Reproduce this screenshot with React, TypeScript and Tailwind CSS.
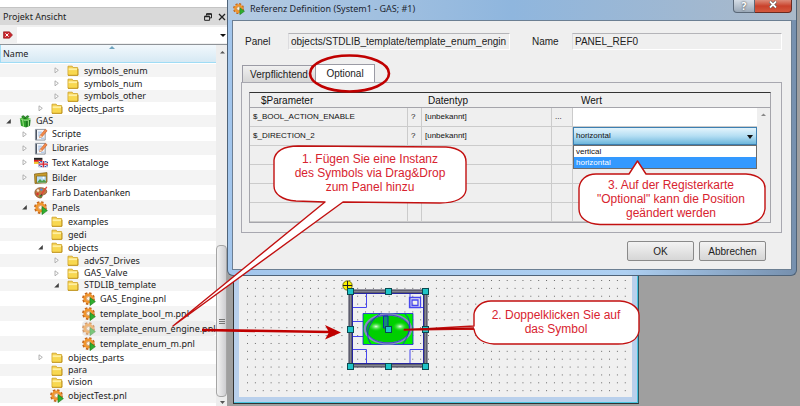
import type { ReactNode } from "react";

type IconName = "folder" | "gift" | "script" | "flags" | "image" | "palette" | "panel";

interface TreeItem {
  label: string;
  icon: IconName;
  indent: string;
  height: string;
  state?: "open" | "closed";
  selected?: boolean;
}

const LEVEL_0 = "pl-[5px]";
const LEVEL_1 = "pl-[21px]";
const LEVEL_2 = "pl-[37px]";
const LEVEL_3 = "pl-[53px]";
const LEVEL_4 = "pl-[69px]";

const tree: TreeItem[] = [
  { label: "symbols_enum", icon: "folder", indent: LEVEL_3, height: "h-[13px]", state: "closed" },
  { label: "symbols_num", icon: "folder", indent: LEVEL_3, height: "h-[13px]", state: "closed" },
  { label: "symbols_other", icon: "folder", indent: LEVEL_3, height: "h-3", state: "closed" },
  { label: "objects_parts", icon: "folder", indent: LEVEL_2, height: "h-[13px]", state: "closed" },
  { label: "GAS", icon: "gift", indent: LEVEL_0, height: "h-3", state: "open" },
  { label: "Scripte", icon: "script", indent: LEVEL_1, height: "h-[14px]", state: "closed" },
  { label: "Libraries", icon: "script", indent: LEVEL_1, height: "h-[14px]", state: "closed" },
  { label: "Text Kataloge", icon: "flags", indent: LEVEL_1, height: "h-[15px]", state: "closed" },
  { label: "Bilder", icon: "image", indent: LEVEL_1, height: "h-[15px]", state: "closed" },
  { label: "Farb Datenbanken", icon: "palette", indent: LEVEL_1, height: "h-[15px]" },
  { label: "Panels", icon: "panel", indent: LEVEL_1, height: "h-[15px]", state: "open" },
  { label: "examples", icon: "folder", indent: LEVEL_2, height: "h-[13px]" },
  { label: "gedi", icon: "folder", indent: LEVEL_2, height: "h-[13px]" },
  { label: "objects", icon: "folder", indent: LEVEL_2, height: "h-[13px]", state: "open" },
  { label: "advS7_Drives", icon: "folder", indent: LEVEL_3, height: "h-[13px]", state: "closed" },
  { label: "GAS_Valve", icon: "folder", indent: LEVEL_3, height: "h-3", state: "closed" },
  { label: "STDLIB_template", icon: "folder", indent: LEVEL_3, height: "h-3", state: "open" },
  { label: "GAS_Engine.pnl", icon: "panel", indent: LEVEL_4, height: "h-[15px]" },
  { label: "template_bool_m.pnl", icon: "panel", indent: LEVEL_4, height: "h-[15px]" },
  { label: "template_enum_engine.pnl", icon: "panel", indent: LEVEL_4, height: "h-[15px]", selected: true },
  { label: "template_enum_m.pnl", icon: "panel", indent: LEVEL_4, height: "h-[15px]" },
  { label: "objects_parts", icon: "folder", indent: LEVEL_2, height: "h-[13px]", state: "closed" },
  { label: "para", icon: "folder", indent: LEVEL_2, height: "h-3" },
  { label: "vision", icon: "folder", indent: LEVEL_2, height: "h-3" },
  { label: "objectTest.pnl", icon: "panel", indent: LEVEL_2, height: "h-[15px]" },
];

function PanelIcon({ size }: { size: string }) {
  return (
    <svg viewBox="0 0 14 14" className={size} aria-hidden="true">
      <circle cx="6.5" cy="6.5" r="5.4" fill="none" stroke="#c2641a" strokeWidth="2" strokeDasharray="2.4 1.84" />
      <circle cx="6.5" cy="6.5" r="3.7" fill="none" stroke="#f0952e" strokeWidth="2.8" />
      <circle cx="6.5" cy="6.5" r="2" fill="#fdf3e4" stroke="#b85c14" strokeWidth="0.5" />
      <path d="M8 5.6 13.4 9.6 8 13.6Z" fill="#2fae2f" stroke="#167a1b" strokeWidth="0.6" />
    </svg>
  );
}

function TreeIcon({ name }: { name: IconName }) {
  if (name === "panel") return <PanelIcon size="h-[14px] w-[14px]" />;
  if (name === "folder")
    return (
      <svg viewBox="0 0 12 11" className="h-[11px] w-3" aria-hidden="true">
        <path d="M1 1.2h4.2l1 1.4h4.4v7.6H1Z" fill="#f6d254" stroke="#d0a62c" strokeWidth="0.9" />
        <path d="M1.600 3.300h8.600v2H1.600Z" fill="#fff0a0" />
        <path d="M1 10.2h10V3.8" fill="none" stroke="#b88a10" strokeWidth="0.9" />
        <path d="M1.6 5.4h8.600v4.2H1.6Z" fill="#f8d850" />
      </svg>
    );
  if (name === "gift")
    return (
      <svg viewBox="0 0 14 13" className="h-[13px] w-[14px]" aria-hidden="true">
        <path d="M2 4 8 6 8 12.6 3 10.8Z" fill="#2e9e2a" />
        <path d="M8 6 12.6 4.4 12 10.8 8 12.6Z" fill="#1c7a1f" />
        <path d="M1.4 3.4 6 1.8 13 3.8 8 6Z" fill="#5fc94a" />
        <path d="M4.6 4.8 5.6 11.8M10.4 5.2V11.6" stroke="#9fe884" strokeWidth="1" />
        <path d="M7 3.6C4 3.6 3 1 5 .8S7 3.6 7 3.6 8 .2 10 .8 9.400 3.800 7 3.600" fill="#39a832" stroke="#135e17" strokeWidth="0.7" />
      </svg>
    );
  if (name === "script")
    return (
      <svg viewBox="0 0 14 14" className="h-[13px] w-[14px]" aria-hidden="true">
        <path d="M1 1.500h10.500v11.500H1Z" fill="#f3f6fa" stroke="#7d8590" strokeWidth="0.9" />
        <path d="M1.400 2v10.600h1.300V2Z" fill="#4c5563" />
        <path d="M4 4.500h4M4 6.500h3M4 8.500h2M7 11h3.500" stroke="#7ea5d8" strokeWidth="0.8" />
        <path d="M5.500 10.500 6.300 7.700 11.700 1.300 13.600 3 8.200 9.400Z" fill="#f08a4a" stroke="#c4501c" strokeWidth="0.6" />
        <path d="M5.500 10.500 6.300 7.700 8.200 9.400Z" fill="#f7dcb8" />
      </svg>
    );
  if (name === "flags")
    return (
      <svg viewBox="0 0 15 11" className="h-[11px] w-[15px]" aria-hidden="true">
        <path d="M0 .5h9v2.200H0Z" fill="#222" />
        <path d="M0 2.700h9v2.100H0Z" fill="#d81e1e" />
        <path d="M0 4.800h9V7H0Z" fill="#f2c62c" />
        <path d="M5 4h10v6.500H5Z" fill="#2c4da3" />
        <path d="m5 4 10 6.500M15 4 5 10.500" stroke="#fff" strokeWidth="1" />
        <path d="M10 4v6.500M5 7.250h10" stroke="#fff" strokeWidth="2.400" />
        <path d="M10 4v6.500M5 7.250h10" stroke="#d81e2c" strokeWidth="1.300" />
      </svg>
    );
  if (name === "image")
    return (
      <svg viewBox="0 0 14 12" className="h-3 w-[14px]" aria-hidden="true">
        <path d="M.500 2 13 .6V10L1 11.500Z" fill="#c99c2b" stroke="#7a5a10" strokeWidth="0.7" />
        <path d="M2.500 4h9.800v7H2.500Z" fill="#b7dcf5" stroke="#8a6a18" strokeWidth="0.8" />
        <path d="M3 10.500 6 7l2 2 2-1.500 2 2v1Z" fill="#4f9e48" />
        <circle cx="9.500" cy="5.800" r="1" fill="#fff" />
      </svg>
    );
  return (
    <svg viewBox="0 0 14 14" className="h-[14px] w-[14px]" aria-hidden="true">
      <path d="M1 5.500C2 1.500 7 .8 10.500 2.500S13 8 10 8.500 9 12.500 6 12 .3 9 1 5.500Z" fill="#c07a42" stroke="#7c4520" strokeWidth="0.7" />
      <circle cx="4" cy="4.500" r="1.300" fill="#f5e8d0" />
      <circle cx="7.300" cy="3.600" r="1.200" fill="#4f8be0" />
      <circle cx="3.500" cy="8" r="1.200" fill="#d93030" />
      <circle cx="6.600" cy="10" r="1.200" fill="#3f9f3f" />
      <path d="M12.800.8 7 9" stroke="#e0453a" strokeWidth="1.300" />
      <path d="M7.600 8 6 10.500 8.400 9Z" fill="#333" />
    </svg>
  );
}

function Expander({ state }: { state?: "open" | "closed" }) {
  return (
    <svg viewBox="0 0 7 7" className="h-[7px] w-[7px] shrink-0" aria-hidden="true">
      {state === "closed" && <path d="M2 .8v5L5.300 3.300Z" fill="#fff" stroke="#a0a0a0" strokeWidth="0.8" />}
      {state === "open" && <path d="M5.800 1v4.600H1.200Z" fill="#404040" />}
    </svg>
  );
}

function ProjectView() {
  return (
    <aside className="flex w-[227px] shrink-0 flex-col bg-[#f0f0f0] font-['Noto_Sans','Open_Sans',sans-serif] text-[9px] text-[#222]">
      <div className="h-[7px] bg-white" />
      <header className="flex h-[18px] items-center border-t border-[#c4c4c4] bg-[#d9d9d9] pr-px pl-[3px]">
        <h2 className="flex-1">Projekt Ansicht</h2>
        <button aria-label="Abdocken" className="mr-1.5">
          <svg viewBox="0 0 8 8" className="h-2 w-2">
            <path d="M2.500 2.500V.9h5v4h-1.500M.600 3.300h5v4H.600Z" fill="none" stroke="#222" strokeWidth="1" />
            <path d="M2.500 1h5M.600 3.500h5" stroke="#222" strokeWidth="1.400" />
          </svg>
        </button>
        <button aria-label="Schließen">
          <svg viewBox="0 0 8 8" className="h-2 w-2">
            <path d="m1 1 6 6M7 1 1 7" stroke="#222" strokeWidth="1.300" />
          </svg>
        </button>
      </header>
      <div className="flex h-[19px] items-center pl-[3px]">
        <button aria-label="Filter löschen" className="mr-1">
          <svg viewBox="0 0 10 8" className="h-2 w-[10px]">
            <path d="M.500.800h6L9.500 4l-3 3.200h-6Z" fill="#c9252b" stroke="#8c1519" strokeWidth="0.600" />
            <path d="m2.400 2.400 3.200 3.200m0-3.200L2.400 5.600" stroke="#fff" strokeWidth="1" />
          </svg>
        </button>
        <input aria-label="Filter" className="h-4 min-w-0 flex-1 bg-white outline-none" />
        <button aria-label="Filter auswählen" className="h-4 w-[10px] bg-white">
          <svg viewBox="0 0 10 16" className="h-4 w-[10px]">
            <path d="M3 7h6L6 10Z" fill="#111" />
          </svg>
        </button>
      </div>
      <div className="flex flex-1 border-t border-[#8f9398]">
        <div className="flex min-w-0 flex-1 flex-col bg-white">
          <div className="relative flex h-[18px] items-center border-b border-l border-[#9fdcf5] bg-linear-to-b from-[#f2f8fc] to-[#d6e9f4] pl-0.5">
            Name
            <svg viewBox="0 0 6 3" className="absolute top-px left-1/2 h-[3px] w-1.5" aria-hidden="true">
              <path d="M0 3 3 0l3 3Z" fill="#6fa3bd" />
            </svg>
          </div>
          <ul className="pt-px leading-[12px]">
            {tree.map((item, index) => (
              <li
                key={index}
                className={`flex items-center ${index % 2 === 0 ? "bg-[#f4f4f4]" : "bg-white"} ${item.height} ${item.indent}`}
              >
                <Expander state={item.state} />
                <span
                  className={`ml-1.5 flex min-w-0 flex-1 items-center gap-1 whitespace-nowrap ${
                    item.selected ? "h-[15px] rounded-sm bg-[#ececec]" : ""
                  }`}
                >
                  <span className={`flex w-[14px] shrink-0 justify-center ${item.selected ? "opacity-60" : ""}`}>
                    <TreeIcon name={item.icon} />
                  </span>
                  {item.label}
                </span>
              </li>
            ))}
          </ul>
        </div>
        <div className="flex w-[11px] shrink-0 flex-col items-center bg-[#ededed]" aria-hidden="true">
          <svg viewBox="0 0 11 16" className="h-4 w-[11px]">
            <path d="M4 8.500h5L6.500 6Z" fill="#555" />
          </svg>
          <div className="flex-[185]" />
          <div className="flex w-full flex-[150] flex-col items-center justify-center gap-px rounded-sm border border-[#a5a5a5] bg-linear-to-r from-[#f2f2f2] to-[#cdcdd0]">
            <i className="h-px w-1.5 bg-[#777]" />
            <i className="h-px w-1.5 bg-[#777]" />
            <i className="h-px w-1.5 bg-[#777]" />
          </div>
          <svg viewBox="0 0 11 9" className="h-[9px] w-[11px]">
            <path d="M4 4h5L6.500 7Z" fill="#555" />
          </svg>
        </div>
      </div>
    </aside>
  );
}

const columns = "grid grid-cols-[158px_14px_130px_21px_1fr]";

function ParameterRow({ children }: { children: ReactNode }) {
  return <tr className={`h-[19px] ${columns}`}>{children}</tr>;
}

const cell = "flex items-center border-r border-b border-[#cbcbcb] pl-[3px]";
const lastCell = "border-b border-[#cbcbcb]";

function ParameterTable() {
  return (
    <div className="relative border border-[#a5a5ab] border-t-[#333]">
      <table className="block w-full text-[8px] text-[#111]">
        <thead className="block">
          <tr className={`h-[15px] border-b border-[#a5a5ab] text-left text-[10px] ${columns}`}>
            <th className="pl-[11px] leading-[15px] font-normal">$Parameter</th>
            <td />
            <th className="pl-1.5 leading-[15px] font-normal">Datentyp</th>
            <td />
            <th className="pl-2 leading-[15px] font-normal">Wert</th>
          </tr>
        </thead>
        <tbody className="block pr-[13px]">
          <ParameterRow>
            <td className={cell}>$_BOOL_ACTION_ENABLE</td>
            <td className={cell}>?</td>
            <td className={cell}>[unbekannt]</td>
            <td className={cell}>...</td>
            <td className="border-b border-[#cbcbcb] bg-white" />
          </ParameterRow>
          <ParameterRow>
            <td className={cell}>$_DIRECTION_2</td>
            <td className={cell}>?</td>
            <td className={cell}>[unbekannt]</td>
            <td className={cell} />
            <td className="relative">
              <select
                aria-label="$_DIRECTION_2"
                defaultValue="horizontal"
                className="block h-[18px] w-full appearance-none border border-[#3c7fb1] bg-linear-to-b from-[#e4f4fc] via-[#b4def3] to-[#6db7dc] pl-0.5"
              >
                <option value="vertical">vertical</option>
                <option value="horizontal">horizontal</option>
              </select>
              <svg viewBox="0 0 6 4" className="absolute top-2 right-1 h-1 w-1.5" aria-hidden="true">
                <path d="M0 0h6L3 4Z" fill="#111" />
              </svg>
              <ul className="absolute top-[18px] left-0 z-10 w-full border border-[#6b6b6b] bg-white leading-[11px]">
                <li className="pl-0.5">vertical</li>
                <li className="bg-[#3399ff] pl-0.5 text-white">horizontal</li>
              </ul>
            </td>
          </ParameterRow>
          {[0, 1, 2, 3].map((row) => (
            <ParameterRow key={row}>
              <td className={cell} />
              <td className={cell} />
              <td className={cell} />
              <td className={cell} />
              <td className={lastCell} />
            </ParameterRow>
          ))}
        </tbody>
      </table>
      <svg viewBox="0 0 12 16" className="absolute top-[14px] right-0 h-4 w-3" aria-hidden="true">
        <path d="M3 9h5L5.500 6.500Z" fill="#888" />
      </svg>
    </div>
  );
}

const fieldStyle =
  "h-[17px] min-w-0 border border-t-[#b4b4b8] border-r-white border-b-white border-l-[#dcdcdf] bg-[#efefef] px-0.5 outline-none";
const buttonStyle =
  "h-[20px] w-[67px] rounded-xs border border-[#8a8a8a] bg-linear-to-b from-[#f3f3f3] to-[#d6d6d6] text-[10px] text-[#222]";

function ReferenceDialog() {
  return (
    <section className="relative z-10 mr-[3px] flex flex-col rounded-b-md border border-t-0 border-[#4f6378] bg-linear-to-r from-[#a3c6ec] via-[#aed0f2] via-70% to-[#7690ae] px-1 pb-[5px]">
      <header className="-mx-1 flex h-5 items-start bg-linear-to-r from-[#b5cbe2] via-[#8fb6de] via-50% to-[#aab9c9] pr-1 pl-[5px] font-['Noto_Sans','Open_Sans',sans-serif] text-[9px] text-[#1c2530]">
        <span className="mt-[3px] mr-[5px]">
          <PanelIcon size="h-3 w-3" />
        </span>
        <h1 className="flex-1 leading-[18px]">Referenz Definition (System1 - GAS; #1)</h1>
        <button
          aria-label="Hilfe"
          className="h-[13px] w-[22px] rounded-bl-sm border border-t-0 border-[#5a6878] bg-linear-to-b from-[#d5dde6] to-[#9ba9b8] text-[10px] leading-[10px] font-bold text-white [text-shadow:0_0_2px_#222]"
        >
          ?
        </button>
        <button
          aria-label="Schließen"
          className="flex h-[13px] w-[37px] justify-center rounded-br-sm border border-t-0 border-l-0 border-[#6a2a20] bg-linear-to-b from-[#dc8a78] via-[#c9412b] to-[#d4583d]"
        >
          <svg viewBox="0 0 10 9" className="h-[9px] w-[10px]">
            <path d="m2 1.500 6 6m0-6-6 6" stroke="#444" strokeWidth="3" />
            <path d="m2 1.500 6 6m0-6-6 6" stroke="#fff" strokeWidth="1.800" />
          </svg>
        </button>
      </header>
      <div className="border border-[#6c7f93] bg-[#efefef] pt-3 pr-[9px] pb-2 pl-2 text-[10px] text-[#222]">
        <div className="flex items-center pl-1">
          <label htmlFor="panel-path" className="w-[43px]">
            Panel
          </label>
          <input
            id="panel-path"
            readOnly
            value="objects/STDLIB_template/template_enum_engin"
            className={`${fieldStyle} w-[222px] shrink-0`}
          />
          <label htmlFor="panel-name" className="ml-[22px] w-10 shrink-0">
            Name
          </label>
          <input id="panel-name" readOnly value="PANEL_REF0" className={`${fieldStyle} flex-1`} />
        </div>
        <div role="tablist" className="mt-[14px] flex items-end pl-px">
          <button role="tab" aria-selected="false" className="h-[17px] w-[74px] border border-b-0 border-[#9b9ba5] bg-linear-to-b from-[#f0f0f0] to-[#d6d6d6]">
            Verpflichtend
          </button>
          <button role="tab" aria-selected="true" className="h-[18px] w-[59px] border border-b-0 border-l-0 border-[#9b9ba5] bg-white">
            Optional
          </button>
        </div>
        <div role="tabpanel" className="border border-[#a8a8b0] pt-[9px] pr-[10px] pb-[9px] pl-[7px]">
          <ParameterTable />
        </div>
        <div className="mt-2 flex justify-end gap-[5px] pr-4">
          <button className={buttonStyle}>OK</button>
          <button className={buttonStyle}>Abbrechen</button>
        </div>
      </div>
    </section>
  );
}

const handles = [
  [4, 12], [42, 12], [79, 12],
  [4, 50], [79, 50],
  [4, 87], [42, 87], [79, 87],
  [42, 50],
];

function EngineSymbol() {
  return (
    <svg viewBox="0 0 86 94" className="absolute top-[3px] left-[107px] h-[94px] w-[86px] overflow-visible" aria-label="Motor">
      <defs>
        <radialGradient id="shine">
          <stop offset="0" stopColor="#e8ffe8" />
          <stop offset="1" stopColor="#00d800" stopOpacity="0" />
        </radialGradient>
      </defs>
      <g fill="none" stroke="#4646f0" strokeWidth="1">
        <path d="M6 28.500h14.500V13M64 13v15.500h15M6 70.500h14.500V86M64 86V70.500h15M6 42.500h14M6 57.500h14" />
        <path d="M63.500 18.500h11v10h-11ZM66 21h6v5.500h-6Z" strokeWidth="1.300" />
      </g>
      <path d="M17 34.500h50v31H17Z" fill="#00f000" stroke="#2020e0" strokeWidth="0.800" />
      <ellipse cx="42" cy="50" rx="23" ry="14.500" fill="#00cf00" stroke="#858cc0" strokeWidth="2.400" />
      <ellipse cx="30" cy="47.500" rx="8" ry="5" fill="url(#shine)" />
      <ellipse cx="54" cy="47.500" rx="8" ry="5" fill="url(#shine)" />
      <ellipse cx="42" cy="50" rx="21.500" ry="14" fill="none" stroke="#2424c8" strokeWidth="0.700" />
      <path d="M25 65C17 55 25 40 34 35M59 35C68 43 62 58 57 65" fill="none" stroke="#2424d0" strokeWidth="0.900" />
      <path d="M37.500 37h4.500v12h-4.500Z" fill="#129070" stroke="#1515c0" strokeWidth="0.900" />
      <path d="M4.500 12.500h75v74h-75Z" fill="none" stroke="#35354a" strokeWidth="4" />
      <path d="M4.500 12.500h75v74h-75Z" fill="none" stroke="#d5d5d5" strokeWidth="2" strokeDasharray="1 1" />
      <path d="M6.500 14.500h71v70h-71Z" fill="none" stroke="#2626a0" strokeWidth="1" />
      <circle cx="1.500" cy="6.500" r="4.700" fill="#f8f000" stroke="#555500" strokeWidth="0.800" />
      <path d="M1.500 2v9M-3 6.500h9" stroke="#222" strokeWidth="1" />
      {handles.map(([x, y]) => (
        <rect key={`${x}-${y}`} x={x - 2.5} y={y - 2.5} width="6" height="6" fill="#1fc4c8" stroke="#0a4a50" strokeWidth="1" />
      ))}
    </svg>
  );
}

function PanelEditor() {
  return (
    <section className="ml-1.5 flex w-[406px] flex-1 flex-col border border-t-0 border-[#333] border-r-[#2b5560]">
      <div className="flex flex-1 border-r border-b border-[#48c4e0] bg-[#b9d0ec] px-[5px] pb-[5px]">
        <div className="relative flex-1 bg-[#f0f0f0]">
          <svg className="absolute inset-0 h-full w-full" aria-hidden="true">
            <pattern id="grid" x="8" y="4" width="7.87" height="7.87" patternUnits="userSpaceOnUse">
              <path d="M0 0h1v1H0Z" fill="#666" />
            </pattern>
            <rect x="8" y="4" width="380" height="100%" fill="url(#grid)" />
          </svg>
          <EngineSymbol />
        </div>
      </div>
    </section>
  );
}

const note = "absolute text-center text-[12px] leading-[14px] whitespace-nowrap text-[#d8232f]";

function Annotations() {
  return (
    <div className="pointer-events-none absolute top-0 left-0 z-20 h-[406px] w-[800px]">
      <svg viewBox="0 0 800 406" className="absolute inset-0 h-[406px] w-[800px]" aria-hidden="true">
        <ellipse cx="349.500" cy="73.500" rx="39.500" ry="18" fill="none" stroke="#c00000" strokeWidth="2.600" />
        <g fill="#fff" stroke="#c21010" strokeWidth="1.400" strokeLinejoin="round">
          <path d="M298 146 446 147C460 148 466 154 466 162V190C465 198 456 203 440 203L343 202 173 326 325 202 296 201C282 200 274 194 274 186V160C275 151 284 146 298 146Z" />
          <path d="M491 301H620C633 302 639 309 639 315V331C638 338 632 344 618 344H494C480 343 475 336 474 329L404 330 474 326V314C475 307 482 301 491 301Z" />
          <path d="M596 174H629L637.500 161 646 174H746C759 175 765 181 765 188V209C764 218 756 224.500 742 224.500H600C586 224 579 217 579 209V188C580 180 586 174 596 174Z" />
        </g>
        <path d="m404 329.500 70-1.500" stroke="#b00000" strokeWidth="1.600" />
        <path d="M202 330 330 332" stroke="#c00000" strokeWidth="2.600" />
        <path d="m341 332.500-16-7.500 4 7.200-4 7.300Z" fill="#c00000" />
      </svg>
      <p className={`${note} top-[152px] left-[274px] w-[192px]`}>
        1. Fügen Sie eine Instanz
        <br />
        des Symbols via Drag&amp;Drop
        <br />
        zum Panel hinzu
      </p>
      <p className={`${note} top-[308px] left-[474px] w-[164px]`}>
        2. Doppelklicken Sie auf
        <br />
        das Symbol
      </p>
      <p className={`${note} top-[178px] left-[579px] w-[184px]`}>
        3. Auf der Registerkarte
        <br />
        &quot;Optional&quot; kann die Position
        <br />
        geändert werden
      </p>
    </div>
  );
}

export default function App() {
  return (
    <div className="relative flex min-h-screen overflow-hidden bg-white font-['Liberation_Sans',Arial,sans-serif]">
      <ProjectView />
      <main className="flex min-w-0 flex-1 flex-col bg-[#9f9f9f] pb-0.5">
        <ReferenceDialog />
        <PanelEditor />
      </main>
      <Annotations />
    </div>
  );
}
